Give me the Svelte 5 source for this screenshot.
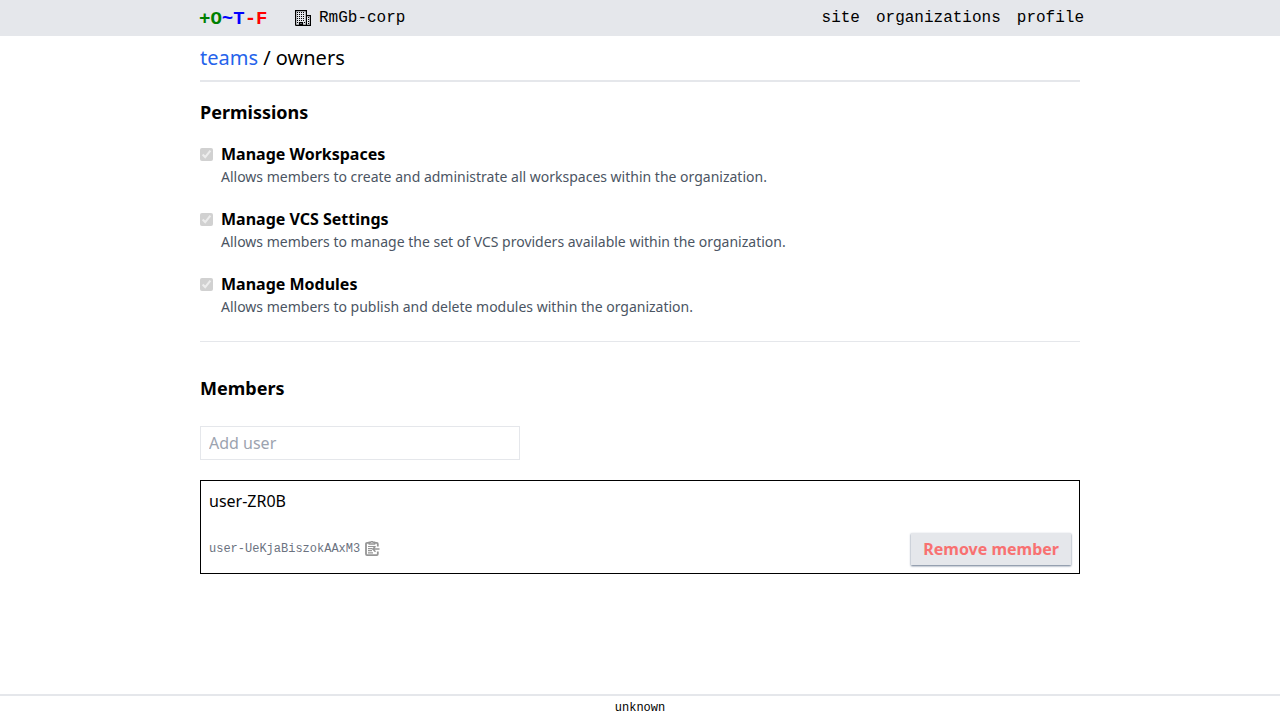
<script>
  const links = ['site', 'organizations', 'profile'];
  const permissions = [
    { id: 'workspaces', title: 'Manage Workspaces', text: 'Allows members to create and administrate all workspaces within the organization.' },
    { id: 'vcs', title: 'Manage VCS Settings', text: 'Allows members to manage the set of VCS providers available within the organization.' },
    { id: 'modules', title: 'Manage Modules', text: 'Allows members to publish and delete modules within the organization.' }
  ];
  let username = $state('');
</script>

<div class="page">
  <header>
    <nav class="container">
      <a class="logo" href="#home"><span class="green">+O</span><span class="blue">~T</span><span class="red">-F</span></a>
      <a class="org" href="#organization">
        <svg width="16" height="16" viewBox="0 0 16 16" fill="none" stroke="currentColor" aria-hidden="true">
          <path stroke-width="1.2" d="M.6 15.4V.6h10.8v14.8M11.4 5.6h4v9.8H.6M4.5 15v-2.5h3V15" />
          <path stroke-width="1" stroke-dasharray="1 1" d="M2 2.5h8M2 4.5h8M2 6.5h8M2 8.5h8M2 10.5h8" />
          <path stroke-width="1" d="M13 7.5h1M13 9.5h1M13 11.5h1M13 13.5h1M2 12.5h1M9 12.5h1" />
          <path stroke-width="2" d="M4 14.5h4" />
        </svg>
        RmGb-corp
      </a>
      <div class="links">
        {#each links as link}<a href="#{link}">{link}</a>{/each}
      </div>
    </nav>
  </header>

  <main class="container">
    <h1><a href="#teams">teams</a> / owners</h1>

    <form class="permissions">
      <h2>Permissions</h2>
      {#each permissions as p}
        <div class="permission">
          <input type="checkbox" id={p.id} aria-describedby="{p.id}-text" checked disabled />
          <label for={p.id}>{p.title}</label>
          <span class="description" id="{p.id}-text">{p.text}</span>
        </div>
      {/each}
    </form>

    <hr />

    <h2>Members</h2>
    <input class="search" type="text" placeholder="Add user" aria-label="Add user" bind:value={username} />

    <article class="member">
      <div>user-ZR0B</div>
      <div class="row">
        <div class="identifier">
          <span>user-UeKjaBiszokAAxM3</span>
          <button class="copy" type="button" aria-label="Copy identifier">
            <svg width="16" height="16" viewBox="0 0 16 16" fill="none" stroke="currentColor" aria-hidden="true">
              <path stroke-width="1.8" stroke-linejoin="round" d="M5 1.9H3a1 1 0 0 0-1 1v10.2a1 1 0 0 0 1 1h9.8a1 1 0 0 0 1-1V10.5M10.8 1.9h2a1 1 0 0 1 1 1V5.5" />
              <path stroke-width="1.4" d="M5.2 3V1.3h1.5a1.3 1.3 0 0 1 2.4 0h1.5V3z" />
              <path stroke-width="1.2" d="M4 5.5h7M4 7.6h4M4 9.7h4M4 11.8h5" />
              <path stroke-width="1.5" d="M15.5 8H9M11.5 5.3L8.8 8l2.7 2.7" />
            </svg>
          </button>
        </div>
        <button class="remove" type="button" disabled>Remove member</button>
      </div>
    </article>
  </main>

  <footer>unknown</footer>
</div>

<style>
  :global(body) { margin: 0; }
  .page { display: flex; flex-direction: column; min-height: 100vh; font: 16px/24px "Noto Sans", sans-serif; color: #000; }
  .page, .page :global(*) { box-sizing: border-box; }
  a { color: inherit; text-decoration: none; }
  .container { width: 100%; max-width: 880px; margin: 0 auto; }
  header { background: #e5e7eb; font-family: "Liberation Mono", monospace; }
  nav { display: flex; align-items: center; height: 36px; }
  .logo { flex: 0 0 96px; margin-left: -1px; padding-top: 2px; font-size: 19px; font-weight: 700; }
  .green { color: #008000; }
  .blue { color: #00f; }
  .red { color: #f00; }
  .org { display: flex; align-items: center; gap: 8px; }
  .links { display: flex; gap: 16px; margin: 0 -4px 0 auto; }
  h1 { margin: 0 0 16px; padding: 8px 0; border-bottom: 2px solid #e5e7eb; font-size: 20px; line-height: 28px; font-weight: 400; }
  h1 a { color: #2563eb; }
  h2 { margin: 0; font-size: 18px; line-height: 28px; font-weight: 700; }
  .permissions { display: flex; flex-direction: column; gap: 16px; }
  .permission { display: grid; grid-template-columns: 13px 1fr; column-gap: 8px; align-items: center; margin-bottom: 4px; }
  .permission input { width: 13px; height: 13px; margin: 0; }
  label { font-weight: 700; }
  .description { grid-column: 2; font-size: 14px; line-height: 21px; color: #4b5563; }
  hr { width: 100%; margin: 20px 0 32px; border: 0; border-top: 1px solid #e5e7eb; }
  .search { display: block; width: 320px; max-width: 100%; height: 34px; margin: 24px 0 20px; padding: 0 8px; border: 1px solid #e5e7eb; font: inherit; }
  .search::placeholder { color: #9ca3af; }
  .member { display: flex; flex-direction: column; gap: 20px; padding: 8px; border: 1px solid #000; }
  .row { display: flex; justify-content: space-between; align-items: center; }
  .identifier { display: flex; align-items: center; gap: 4px; font: 12px/16px "Liberation Mono", monospace; color: #6b7280; }
  .copy { display: flex; padding: 0; border: 0; background: none; color: #969696; }
  .remove { height: 32px; padding: 0 12px; border: 0; background: #e5e7eb; color: #f87171; font: 700 16px/24px "Noto Sans", sans-serif; box-shadow: 0 1px 2px #64748b; }
  footer { margin-top: auto; border-top: 2px solid #e5e7eb; font: 12px/24px "Liberation Mono", monospace; text-align: center; }
</style>
